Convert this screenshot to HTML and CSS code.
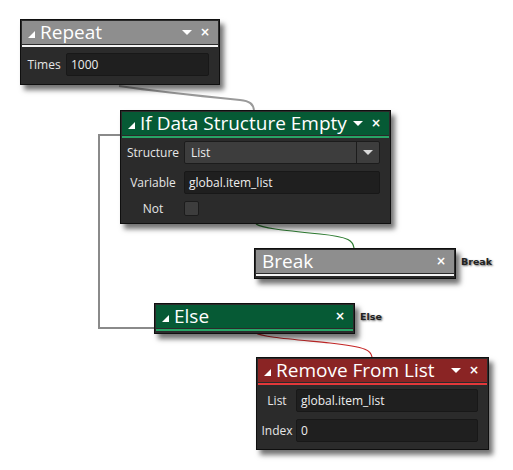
FILE: index.html
```html
<!DOCTYPE html>
<html>
<head>
<meta charset="utf-8">
<link rel="stylesheet" href="styles.css">
</head>
<body>
<div class="canvas">
  <svg class="wires" width="513" height="470" viewBox="0 0 513 470">
    <path d="M119 86 C 160 92, 200 96, 240 100 C 250 101, 253 104, 254 110" fill="none" stroke="#9a9a9a" stroke-width="2"/>
    <path d="M120 135 L99 135 L99 328 L154 328" fill="none" stroke="#8a8a8a" stroke-width="2"/>
    <path d="M256 224 C 262 228, 280 230, 320 234 C 350 237, 353 241, 354 248" fill="none" stroke="#2e7d32" stroke-width="1.2"/>
    <path d="M256 333 C 262 337, 290 339, 330 343 C 368 347, 371 351, 372 357" fill="none" stroke="#c62828" stroke-width="1.2"/>
  </svg>

  <div class="node repeat">
    <div class="title grey">
      <span class="tri"></span><span class="name">Repeat</span>
      <span class="ctl"><span class="arrow"></span><span class="x">×</span></span>
    </div>
    <div class="body">
      <div class="row"><span class="lbl">Times</span><span class="field">1000</span></div>
    </div>
  </div>

  <div class="node ifds">
    <div class="title green">
      <span class="tri"></span><span class="name">If Data Structure Empty</span>
      <span class="ctl"><span class="arrow"></span><span class="x">×</span></span>
    </div>
    <div class="body">
      <div class="row"><span class="lbl">Structure</span><span class="select"><span class="val">List</span><span class="btn"><span class="arrow small"></span></span></span></div>
      <div class="row"><span class="lbl">Variable</span><span class="field">global.item_list</span></div>
      <div class="row"><span class="lbl">Not</span><span class="check"></span></div>
    </div>
  </div>

  <div class="node brk">
    <div class="title grey">
      <span class="name">Break</span>
      <span class="ctl"><span class="x">×</span></span>
    </div>
  </div>
  <span class="tag tag-break">Break</span>

  <div class="node els">
    <div class="title green">
      <span class="tri"></span><span class="name">Else</span>
      <span class="ctl"><span class="x">×</span></span>
    </div>
  </div>
  <span class="tag tag-else">Else</span>

  <div class="node rem">
    <div class="title red">
      <span class="tri"></span><span class="name">Remove From List</span>
      <span class="ctl"><span class="arrow"></span><span class="x">×</span></span>
    </div>
    <div class="body">
      <div class="row"><span class="lbl">List</span><span class="field">global.item_list</span></div>
      <div class="row"><span class="lbl">Index</span><span class="field">0</span></div>
    </div>
  </div>
</div>
</body>
</html>
```

FILE: styles.css
```css
html, body {
  margin: 0;
  padding: 0;
  background: #ffffff;
}
.canvas {
  position: relative;
  width: 513px;
  height: 470px;
  overflow: hidden;
  font-family: "Open Sans", "Noto Sans", sans-serif;
}
.wires {
  position: absolute;
  left: 0;
  top: 0;
}
.node {
  position: absolute;
  box-sizing: border-box;
  background: #2b2b2b;
  border: 1px solid #0f0f0f;
  padding: 1px;
  box-shadow: 4px 5px 5px rgba(0, 0, 0, 0.55);
  display: flex;
  flex-direction: column;
}
.title {
  display: flex;
  align-items: center;
  height: 23px;
  flex: none;
  color: #ffffff;
  padding: 0 8px 0 6px;
  box-sizing: border-box;
  margin-bottom: 3px;
}
.title.grey { background: #8e8e8e; box-shadow: 0 1px 0 #2b2b2b, 0 3px 0 #f4f4f4; }
.title.green { background: #065a35; box-shadow: 0 1px 0 #2b2b2b, 0 3px 0 #27a566; }
.title.red { background: #8a2424; box-shadow: 0 1px 0 #2b2b2b, 0 3px 0 #e2383a; }
.tri {
  width: 0;
  height: 0;
  border-left: 7px solid transparent;
  border-bottom: 7px solid #ffffff;
  margin: 3px 5px 0 0;
}
.name {
  font-size: 19px;
  line-height: 23px;
  flex: 1;
  white-space: nowrap;
}
.ctl {
  display: flex;
  align-items: center;
  gap: 8px;
}
.arrow {
  width: 0;
  height: 0;
  border-left: 5px solid transparent;
  border-right: 5px solid transparent;
  border-top: 5px solid #ffffff;
}
.arrow.small {
  border-top-color: #d8d8d8;
}
.x {
  font-family: "DejaVu Sans", sans-serif;
  font-weight: bold;
  font-size: 12px;
  line-height: 13px;
}
.body {
  flex: 1;
  display: flex;
  flex-direction: column;
  justify-content: center;
  gap: 7px;
  padding: 0 9px 2px 0;
  color: #e6e6e6;
  font-size: 12px;
}
.row {
  display: flex;
  align-items: center;
}
.lbl {
  text-align: center;
  flex: none;
}
.field {
  flex: 1;
  height: 23px;
  box-sizing: border-box;
  background: #1f1f1f;
  border: 1px solid #181818;
  border-radius: 2px;
  padding: 0 4px;
  line-height: 21px;
  color: #eeeeee;
}
.select {
  flex: 1;
  display: flex;
  height: 23px;
  box-sizing: border-box;
  background: #3d3d3d;
  border: 1px solid #1c1c1c;
  border-radius: 2px;
}
.select .val {
  flex: 1;
  padding: 0 6px;
  line-height: 21px;
  color: #eeeeee;
}
.select .btn {
  width: 22px;
  border-left: 1px solid #1c1c1c;
  display: flex;
  align-items: center;
  justify-content: center;
}
.check {
  width: 15px;
  height: 15px;
  box-sizing: border-box;
  background: #3d3d3d;
  border: 1px solid #1c1c1c;
  border-radius: 2px;
}

.repeat { left: 20px; top: 19px; width: 200px; height: 66px; }
.repeat .lbl { width: 44px; }
.ifds { left: 120px; top: 110px; width: 271px; height: 114px; }
.ifds .body { justify-content: flex-start; padding-top: 3px; }
.ifds .lbl { width: 62px; }
.ifds .row:last-child { height: 15px; align-items: flex-start; line-height: 15px; }
.brk { left: 254px; top: 248px; width: 202px; height: 31px; }
.els { left: 154px; top: 303px; width: 201px; height: 31px; }
.rem { left: 256px; top: 357px; width: 233px; height: 93px; }
.rem .lbl { width: 38px; }

.tag {
  position: absolute;
  font-family: "DejaVu Sans", sans-serif;
  font-weight: bold;
  font-size: 9.5px;
  color: #222;
  text-shadow: 1px 1px 2px rgba(0,0,0,0.6);
}
.tag-break { left: 461px; top: 256px; }
.tag-else { left: 360px; top: 311px; }
```
